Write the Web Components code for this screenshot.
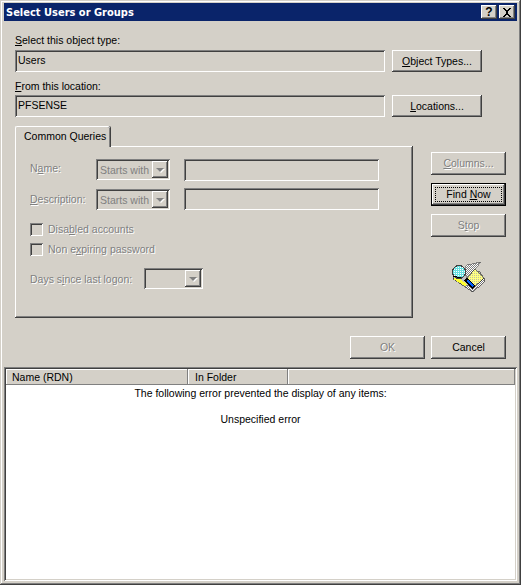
<!DOCTYPE html>
<html>
<head>
<meta charset="utf-8">
<title>Select Users or Groups</title>
<style>
html,body{margin:0;padding:0;background:#d4d0c8;}
body{font:10.5px "Liberation Sans",Arial,sans-serif;color:#000;overflow:hidden;}
</style>
</head>
<body>
<win-dialog caption="Select Users or Groups">
  <top-form></top-form>
  <query-area></query-area>
  <dialog-actions></dialog-actions>
  <result-list></result-list>
</win-dialog>

<script>
const uiFont = `10.5px "Liberation Sans",Arial,sans-serif`
const raised = `box-shadow:inset -1px -1px #404040,inset 1px 1px #fff,inset -2px -2px #808080,inset 2px 2px #d4d0c8;`
const sunken = `box-shadow:inset 1px 1px #808080,inset -1px -1px #fff,inset 2px 2px #404040,inset -2px -2px #d4d0c8;`

class WinDialog extends HTMLElement {
    connectedCallback(){
        this.attachShadow({mode:'open'}).innerHTML = `
        <style>
        :host{display:block;width:521px;height:585px;box-sizing:border-box;background:#d4d0c8;
            box-shadow:inset -1px -1px #404040,inset 1px 1px #d4d0c8,inset -2px -2px #808080,inset 2px 2px #fff;
            padding:3px 4px 5px 4px;overflow:hidden;}
        .bar{height:18px;background:#0a246a;color:#fff;display:flex;align-items:center;
            font:bold 11px "DejaVu Sans Condensed","Liberation Sans",sans-serif;padding:0 2px 0 2px;}
        .bar span{flex:1;white-space:nowrap;}
        .tb{width:16px;height:14px;margin-left:1px;background:#d4d0c8;${raised}color:#000;
            display:flex;align-items:center;justify-content:center;font:bold 12px "Liberation Sans",Arial,sans-serif;}
        .tb+.tb{margin-left:2px;}
        </style>
        <div class="bar"><span>${this.getAttribute('caption')}</span>
            <div class="tb">?</div>
            <div class="tb"><svg width="10" height="9" viewBox="0 0 10 9"><path d="M1 0h2v1h1v1h2V1h1V0h2v1H8v1H7v1H6v3h1v1h1v1h1v1H7V8H6V7H4v1H3v1H1V8h1V7h1V6h1V3H3V2H2V1H1z" fill="#000"/></svg></div>
        </div>
        <slot></slot>`
    }
}

class WinButton extends HTMLElement {
    connectedCallback(){
        this.attachShadow({mode:'open'}).innerHTML = `
        <style>
        :host{display:flex;align-items:center;justify-content:center;box-sizing:border-box;
            width:75px;height:23px;background:#d4d0c8;${raised}white-space:pre;padding-bottom:1px;
            font:${uiFont};color:#000;position:relative;}
        :host([disabled]){color:#808080;text-shadow:1px 1px #fff;}
        :host([default]){box-shadow:inset 0 0 0 1px #000,inset -2px -2px #404040,inset 2px 2px #fff,inset -3px -3px #808080;}
        .focus{display:none;position:absolute;inset:4px;border:1px dotted #000;}
        :host([default]) .focus{display:block;}
        </style>
        <span><slot></slot></span><div class="focus"></div>`
    }
}

class WinField extends HTMLElement {
    connectedCallback(){
        this.attachShadow({mode:'open'}).innerHTML = `
        <style>
        :host{display:block;box-sizing:border-box;height:22px;${sunken}background:#d4d0c8;padding:4px 3px 0;
            font:${uiFont};color:#000;white-space:nowrap;}
        </style><slot></slot>`
    }
}

class WinSelect extends HTMLElement {
    connectedCallback(){
        this.attachShadow({mode:'open'}).innerHTML = `
        <style>
        :host{display:flex;box-sizing:border-box;height:21px;${sunken}background:#d4d0c8;padding:2px;
            font:${uiFont};color:#808080;white-space:nowrap;text-shadow:none;}
        .v{flex:1;padding:3px 0 0 2px;}
        .arrow{width:16px;height:17px;background:#d4d0c8;${raised}display:flex;align-items:center;justify-content:center;}
        .arrow i{display:block;width:0;height:0;border:4px solid transparent;border-top:4px solid #808080;border-bottom:0;filter:drop-shadow(1px 1px 0 #fff);}
        </style><div class="v"><slot></slot></div><div class="arrow"><i></i></div>`
    }
}

class WinCheck extends HTMLElement {
    connectedCallback(){
        this.attachShadow({mode:'open'}).innerHTML = `
        <style>
        :host{display:flex;align-items:center;height:20px;font:${uiFont};color:#808080;text-shadow:1px 1px #fff;white-space:nowrap;}
        .box{width:13px;height:13px;box-sizing:border-box;${sunken}margin-right:5px;}
        </style><div class="box"></div><slot></slot>`
    }
}

class TopForm extends HTMLElement {
    connectedCallback(){
        this.attachShadow({mode:'open'}).innerHTML = `
        <style>
        :host{display:grid;grid-template-columns:370px 90px;column-gap:7px;margin:12px 0 0 11px;font:${uiFont};}
        label{grid-column:1 / 3;height:17px;line-height:14px;white-space:nowrap;box-sizing:border-box;}
        label.second{height:16px;}
        win-field{margin-bottom:7px;}
        win-button{width:90px;height:22px;}
        </style>
        <label><u>S</u>elect this object type:</label>
        <win-field>Users</win-field><win-button><u>O</u>bject Types...</win-button>
        <label class="second"><u>F</u>rom this location:</label>
        <win-field>PFSENSE</win-field><win-button><u>L</u>ocations...</win-button>`
    }
}

class QueryArea extends HTMLElement {
    connectedCallback(){
        this.attachShadow({mode:'open'}).innerHTML = `
        <style>
        :host{display:flex;margin:2px 0 0 11px;font:${uiFont};}
        .tabs{width:398px;}
        .tab{width:95px;height:21px;margin-bottom:-1px;box-sizing:border-box;border:solid #fff;border-width:1px 0 0 1px;border-radius:2px 2px 0 0;
            box-shadow:inset -1px 0 #808080,1px 0 #404040;padding:3px 0 0 8px;white-space:nowrap;position:relative;z-index:1;background:#d4d0c8;}
        .panel{height:172px;box-sizing:border-box;box-shadow:inset -1px -1px #404040,inset 1px 1px #fff,inset -2px -2px #808080;
            padding:13px 0 0 15px;color:#808080;text-shadow:1px 1px #fff;}
        .row{display:grid;grid-template-columns:66px 74px 195px;align-items:start;margin-bottom:7px;white-space:nowrap;}
        .row span{padding-top:3px;}
        .row.desc span{padding-top:5px;}
        .row.desc win-select{margin-top:1px;}
        .row win-field{height:22px;margin-left:14px;width:195px;}
        .row win-select{width:74px;}
        .checks{padding-top:2px;}
        .days{display:flex;align-items:center;margin-top:9px;white-space:nowrap;}
        .days span{width:114px;padding-top:1px;}
        .days win-select{width:59px;}
        .side{margin-left:18px;padding-top:26px;display:flex;flex-direction:column;gap:8px;}
        svg{display:block;margin:16px 0 0 21px;}
        </style>
        <div class="tabs">
            <div class="tab">Common Queries</div>
            <div class="panel">
                <div class="row"><span>N<u>a</u>me:</span><win-select>Starts with</win-select><win-field></win-field></div>
                <div class="row desc"><span><u>D</u>escription:</span><win-select>Starts with</win-select><win-field></win-field></div>
                <div class="checks">
                    <win-check>Disa<u>b</u>led accounts</win-check>
                    <win-check>Non e<u>x</u>piring password</win-check>
                </div>
                <div class="days"><span>Days s<u>i</u>nce last logon:</span><win-select></win-select></div>
            </div>
        </div>
        <div class="side">
            <win-button disabled><u>C</u>olumns...</win-button>
            <win-button default>Find <u>N</u>ow</win-button>
            <win-button disabled>S<u>t</u>op</win-button>
            <svg width="34" height="32" viewBox="0 0 34 32" shape-rendering="crispEdges">
                <defs>
                    <pattern id="chk" width="2" height="2" patternUnits="userSpaceOnUse"><rect width="2" height="2" fill="#fff"/><rect width="1" height="1" fill="#808080"/><rect x="1" y="1" width="1" height="1" fill="#808080"/></pattern>
                    <pattern id="yel" width="2" height="2" patternUnits="userSpaceOnUse"><rect width="2" height="2" fill="#ffff80"/><rect width="1" height="1" fill="#c0c0a0"/></pattern>
                    <pattern id="cy" width="2" height="2" patternUnits="userSpaceOnUse"><rect width="2" height="2" fill="#66e0e0"/><rect width="1" height="1" fill="#fff"/></pattern>
                </defs>
                <!-- base box -->
                <path d="M1 18L21 31L32 21L32 17L21 26L1 17Z" fill="url(#chk)" stroke="#333" stroke-width=".7"/>
                <path d="M1 17L9 10L28 11L32 17L21 27Z" fill="#c0c0c0" stroke="#404040" stroke-width=".7"/>
                <!-- back page and yellow sheet -->
                <path d="M11 9L15 4L29 1L23 8L15 17Z" fill="url(#chk)" stroke="#606060" stroke-width=".7"/>
                <path d="M15 17L23 8L32 17L21 27Z" fill="url(#yel)" stroke="#404040" stroke-width=".7"/>
                <!-- yellow stripe and blue pen -->
                <path d="M1 18L5 16L15 23L13 25Z" fill="#ffff33"/>
                <path d="M12 19L15 17L23 25L20 28Z" fill="#000"/>
                <path d="M14 20L16 19L22 25L20 26Z" fill="#0060ff"/>
                <circle cx="7" cy="11" r="6.5" fill="url(#cy)" stroke="#404040"/>
                <path d="M1 15L9 17" stroke="#000"/>
            </svg>
        </div>`
    }
}

class DialogActions extends HTMLElement {
    connectedCallback(){
        this.attachShadow({mode:'open'}).innerHTML = `
        <style>
        :host{display:flex;justify-content:flex-end;gap:6px;margin:18px 11px 0 0;}
        </style>
        <win-button disabled>OK</win-button><win-button>Cancel</win-button>`
    }
}

class ResultList extends HTMLElement {
    connectedCallback(){
        this.attachShadow({mode:'open'}).innerHTML = `
        <style>
        :host{display:block;box-sizing:border-box;margin:8px 0 0 0;height:214px;width:513px;background:#fff;${sunken}padding:2px;
            font:${uiFont};}
        .head{display:grid;grid-template-columns:182px 100px 1fr;height:16px;}
        .head div{background:#d4d0c8;box-shadow:inset -1px -1px #808080,inset 1px 1px #fff;padding:2px 0 0 6px;white-space:nowrap;}
        .head div+div{padding-left:7px;}
        .msg{text-align:center;line-height:14px;padding-top:1px;}
        .msg p{margin:0 0 12px;}
        </style>
        <div class="head"><div>Name (RDN)</div><div>In Folder</div><div></div></div>
        <div class="msg"><p>The following error prevented the display of any items:</p><p>Unspecified error</p></div>`
    }
}

customElements.define('win-dialog',WinDialog)
customElements.define('win-button',WinButton)
customElements.define('win-field',WinField)
customElements.define('win-select',WinSelect)
customElements.define('win-check',WinCheck)
customElements.define('top-form',TopForm)
customElements.define('query-area',QueryArea)
customElements.define('dialog-actions',DialogActions)
customElements.define('result-list',ResultList)
</script>
</body>
</html>
